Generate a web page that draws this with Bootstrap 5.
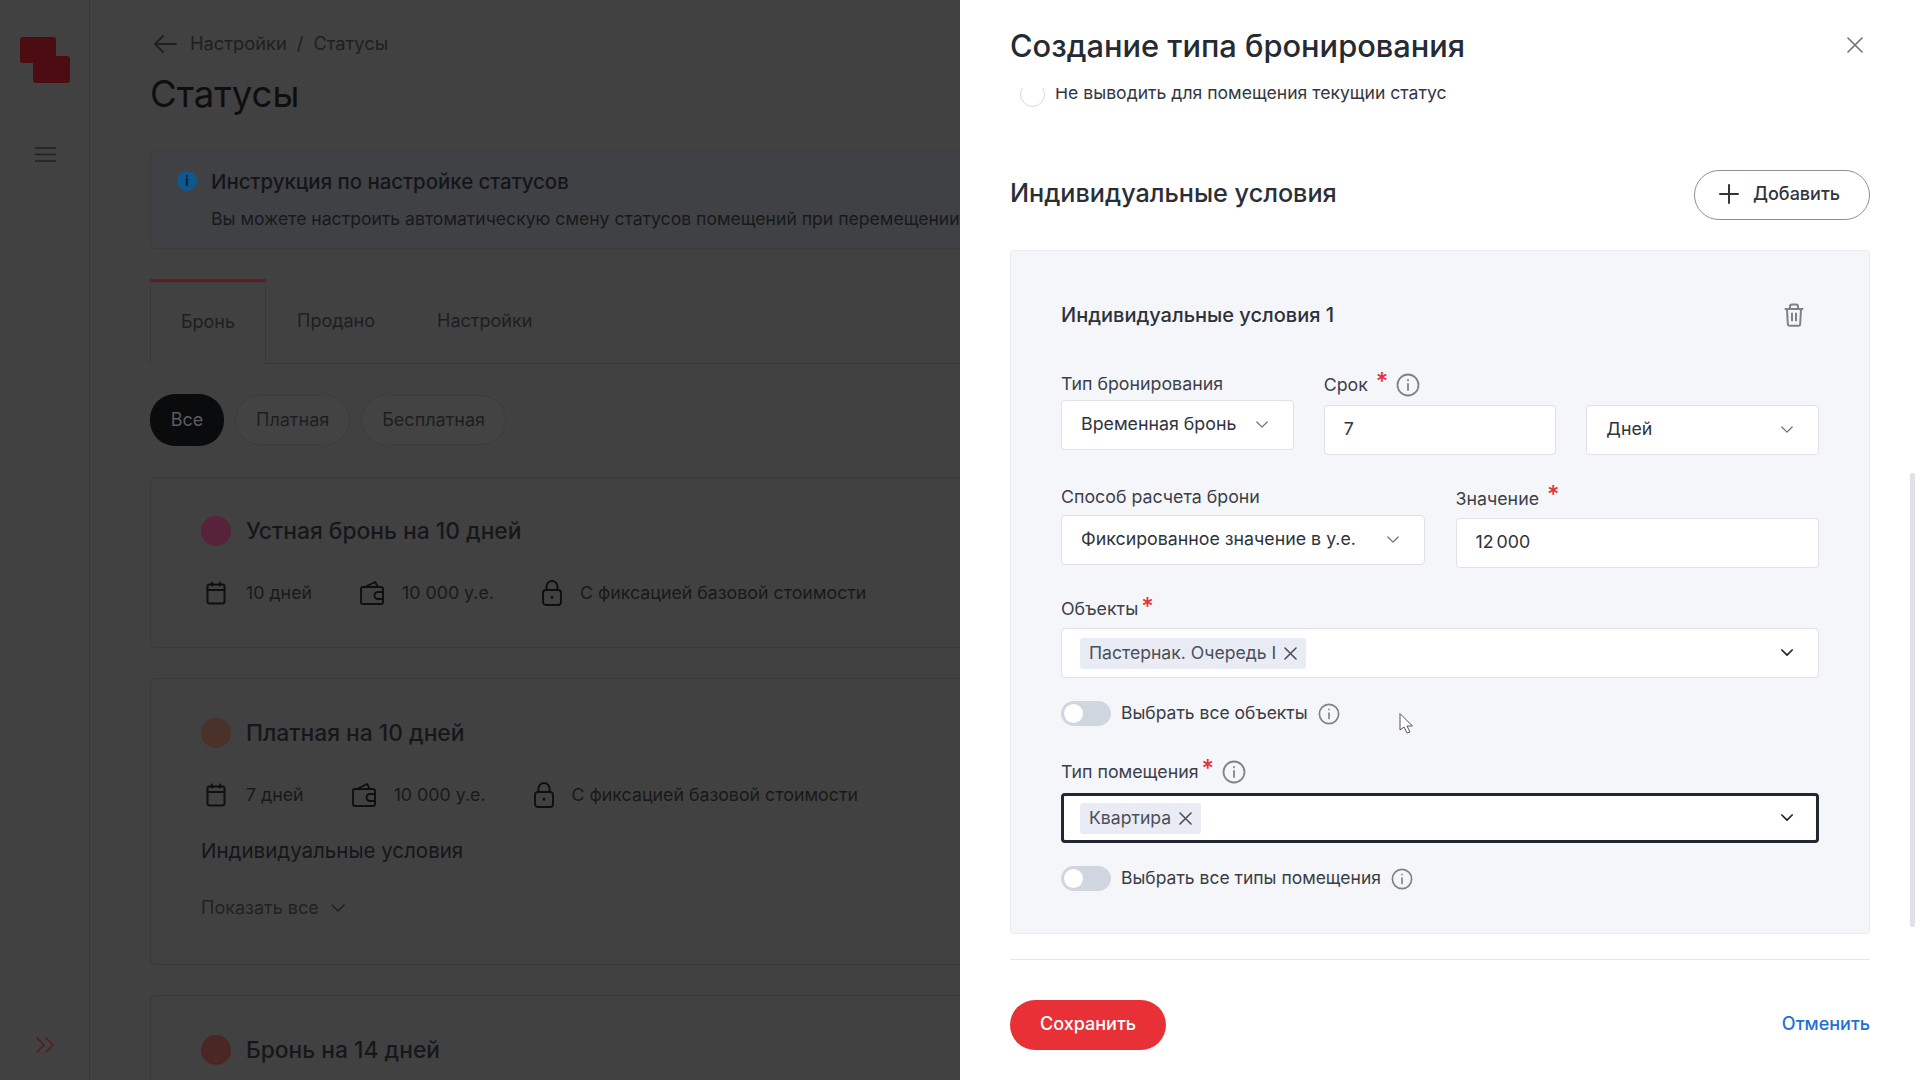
<!DOCTYPE html>
<html lang="ru">
<head>
    <meta charset="UTF-8">
    <meta name="viewport" content="width=device-width, initial-scale=1.0">
    <title>Статусы</title>
    <link href="https://cdn.jsdelivr.net/npm/bootstrap@5.3.0/dist/css/bootstrap.min.css" rel="stylesheet">
    <style>
        html, body { height: 100%; overflow: hidden; }
        body { font-family: Inter, "Noto Sans", sans-serif; background: #414141; color: #12141a; }
        svg { display: block; flex: none; fill: none; stroke: currentColor; stroke-width: 1.6; stroke-linecap: round; stroke-linejoin: round; }

        /* dimmed page behind the drawer */
        .side-rail { width: 90px; height: 100vh; flex: none; border-right: 1px solid #373737; padding: 37px 0 0 20px; position: relative; }
        .rail-logo { stroke: none; }
        .rail-logo path { fill: #4c0d12; }
        .rail-burger { margin: 64px 0 0 15px; color: #202020; stroke-width: 1.4; }
        .rail-expand { position: absolute; left: 36px; bottom: 27px; color: #5e1317; stroke-width: 1.3; }
        .page-main { padding: 29px 0 0 60px; width: 1830px; flex: none; }
        .crumbs { height: 30px; font-size: 18.3px; color: #1f1f1f; gap: 13px; }
        .crumb-back { margin-left: 3px; stroke-width: 2; }
        .crumb-sep { margin: 0 10px; }
        .page-title { font-size: 36.5px; line-height: 44px; font-weight: 400; margin: 13px 0 34px; color: #0e0e0e; }
        .info-box { height: 99px; background: #3f4144; border: 1px solid #3a3c40; border-radius: 5px; padding: 17px 0 0 26px; }
        .info-dot { width: 20px; height: 20px; border-radius: 50%; background: #0f578f; color: #0a2338; font-size: 14px; font-weight: 700; line-height: 20px; text-align: center; margin: 3px 14px 0 0; }
        .info-head { font-size: 20.4px; font-weight: 500; color: #13151a; line-height: 28px; }
        .info-text { font-size: 17.6px; color: #17191d; white-space: nowrap; margin: 11px 0 0 34px; line-height: 24px; }
        .tab-strip { margin-top: 30px; height: 85px; border-bottom: 1px solid #383838; font-size: 18px; color: #1e1e1e; }
        .tab-on { width: 116px; height: 85px; margin-bottom: -1px; border: 1px solid #383838; border-top: 3px solid #651a1e; border-bottom: 0; background: #414141; text-align: center; padding-top: 26px; }
        .tab-off { padding: 28px 0 0; margin-left: 31px; }
        .tab-off + .tab-off { margin-left: 62px; }
        .pill-row { margin: 30px 0 31px; gap: 11px; font-size: 18px; color: #1e1e1e; }
        .pill-item { height: 50px; line-height: 48px; border: 1px solid #3c3c3c; border-radius: 25px; padding: 0 20px; background: #434343; margin-top: 1px; }
        .pill-on { height: 52px; line-height: 52px; border: 0; margin-top: 0; background: #0a0b0d; color: #5c5c5c; width: 74px; padding: 0; text-align: center; }
        .stat-card { border: 1px solid #393939; border-radius: 5px; padding: 39px 0 0 50px; margin-bottom: 30px; height: 171px; }
        .stat-tall { height: 287px; }
        .stat-head { margin-top: -1px; }
        .stat-tall .stat-head, .stat-tall ~ .stat-card .stat-head { margin-top: 0; }
        .stat-dot { width: 30px; height: 30px; border-radius: 50%; margin-right: 15px; }
        .dot-plum { background: #57233b; }
        .dot-brown { background: #4a322b; }
        .dot-rust { background: #4a2624; }
        .stat-name { font-size: 22.8px; font-weight: 500; color: #16171a; line-height: 30px; }
        .stat-meta { margin-top: 33px; font-size: 17.8px; color: #191919; line-height: 28px; }
        .stat-meta svg { margin-right: 17px; color: #0f0f0f; stroke-width: 1.9; }
        .stat-meta svg:first-child { margin-left: 3px; margin-right: 18px; }
        .stat-gap { margin-right: 47px; }
        .stat-sub { font-size: 20.5px; color: #15161a; margin-top: 28px; line-height: 28px; }
        .stat-more { font-size: 18px; color: #212121; margin-top: 29px; line-height: 28px; gap: 12px; }

        /* drawer */
        .drawer-wide.offcanvas { width: 960px; border-left: 0; color: #262a33; }
        .drawer-head { height: 88px; padding: 0 50px; flex: none; background: #fff; position: relative; z-index: 2; }
        .drawer-title { font-size: 30.8px; line-height: 40px; font-weight: 500; color: #252a33; margin: 0; padding-top: 26px; }
        .drawer-close { position: absolute; right: 57px; top: 37px; color: #6d7178; }
        .drawer-body { padding: 0 50px; overflow: hidden; flex: 1; }
        .radio-line { margin: -6px 0 0 10px; height: 25px; font-size: 17.6px; line-height: 24px; color: #33373f; }
        .radio-line .form-check-input { width: 25px; height: 25px; margin: 0 10px 0 0; border-color: #d9dbe0; flex: none; }
        .radio-text { margin-top: -4px; }
        .cond-row { margin-top: 63px; height: 49px; }
        .cond-title { font-size: 25.2px; font-weight: 500; color: #2a2e37; margin: 0 0 2px; }
        .add-btn { width: 176px; height: 50px; border: 1px solid #8d9096; border-radius: 25px; font-size: 18px; font-weight: 500; color: #31353d; background: #fff; padding: 0 5px 2px 0; gap: 14px; }
        .add-btn svg { stroke-width: 2; }
        .cond-card { margin-top: 31px; background: #f5f6f9; border: 1px solid #e9ebef; border-radius: 4px; padding: 51px 50px 43px; height: 684px; }
        .cond-sub { font-size: 20px; font-weight: 500; line-height: 26px; color: #2d313a; margin: 0; }
        .trash-icon { color: #7c8087; margin-right: 15px; stroke-width: 2; }
        .field-lab { font-size: 17.8px; line-height: 22px; color: #3c4049; margin-bottom: 5px; gap: 5px; }
        .req-star { color: #e73137; font-size: 24px; font-weight: 500; line-height: 14px; align-self: flex-start; margin-top: 2px; }
        .tip-icon { color: #7f8389; margin-left: 3px; stroke-width: 1.8; }
        .field-box.form-control, .field-box.form-select { height: 50px; font-size: 17.8px; color: #2f333c; border: 1px solid #e0e2e8; border-radius: 4px; padding: 0 19px 1px; box-shadow: none; }
        .field-box.form-control { padding-bottom: 3px; }
        .value-money { word-spacing: -2px; }
        .field-box.form-select { background-image: url("data:image/svg+xml,%3csvg xmlns='http://www.w3.org/2000/svg' viewBox='0 0 14 9'%3e%3cpath fill='none' stroke='%236f737b' stroke-width='1.5' stroke-linecap='round' stroke-linejoin='round' d='M1 1l6 6 6-6'/%3e%3c/svg%3e"); background-position: right 25px center; background-size: 12px 8px; }
        .field-box.multi-box.form-select { padding: 0 18px; background-image: url("data:image/svg+xml,%3csvg xmlns='http://www.w3.org/2000/svg' viewBox='0 0 14 9'%3e%3cpath fill='none' stroke='%231f2733' stroke-width='2' stroke-linecap='round' stroke-linejoin='round' d='M1 1l6 6 6-6'/%3e%3c/svg%3e"); }
        .field-box.multi-focus.form-select { border: 3px solid #1f2733; padding: 0 16px; background-position: right 23px center; }
        .chip-item { height: 31px; line-height: 31px; padding: 0 9px 2px; background: #e9ecf4; border-radius: 3px; font-size: 17.6px; color: #4b4f58; gap: 8px; }
        .chip-item svg { margin-top: 2px; }
        .switch-line { gap: 10px; font-size: 17.5px; color: #393d46; height: 25px; padding: 0; margin: 0; }
        .switch-line .form-check-input { width: 50px; height: 25px; margin: 0; background-color: #cfd6df; border-color: #cfd6df; float: none; background-image: url("data:image/svg+xml,%3csvg xmlns='http://www.w3.org/2000/svg' viewBox='-4 -4 8 8'%3e%3ccircle r='3.3' fill='%23fff'/%3e%3c/svg%3e"); }
        .switch-line .tip-icon { margin-left: 0; }
        .drawer-rule { height: 1px; background: #e5e7eb; margin-top: 25px; }
        .drawer-foot { margin-top: 40px; }
        .save-btn { width: 156px; height: 50px; border-radius: 25px; background: #e73137; border: 0; color: #fff; font-size: 18px; font-weight: 500; padding: 0 0 3px; }
        .cancel-link { font-size: 18px; font-weight: 500; color: #1f6fd6; text-decoration: none; margin-bottom: 3px; }
        .drawer-scroll { position: absolute; right: 5px; top: 473px; width: 5px; height: 454px; background: #dfe1e6; border-radius: 3px; }
        .mouse-arrow { position: absolute; left: 1399px; top: 713px; z-index: 1100; stroke: #555; stroke-width: 1; fill: #fff; }

        /* form rows of the condition card */
        .row-term { margin-top: 45px; gap: 30px; }
        .row-calc { margin-top: 31px; gap: 31px; }
        .fld-third { width: 233px; }
        .fld-half { width: 364px; }
        .fld-unit { padding-top: 32px; }
        .lab-term { height: 24px; margin-bottom: 8px; }
        .lab-calc { margin-bottom: 7px; }
        .lab-value { height: 26px; margin-bottom: 6px; }
        .star-far { margin-left: 3px; }
        .star-near { margin-left: -2px; }
        .fld-objects { margin-top: 30px; }
        .lab-objects { margin-bottom: 8px; }
        .switch-first { margin-top: 23px; }
        .fld-rooms { margin-top: 34px; }
        .lab-rooms { margin-bottom: 9px; height: 24px; }
        .switch-second { margin-top: 23px; }
    </style>
</head>
<body>
    <svg width="0" height="0" class="position-absolute">
        <symbol id="i-cal" viewBox="0 0 24 24"><rect x="3.5" y="3.5" width="17" height="19" rx="2"/><path d="M3.5 9h17M8 1.500v3M16 1.500v3"/></symbol>
        <symbol id="i-wallet" viewBox="0 0 26 24"><path d="M6 6h16a2 2 0 0 1 2 2v13a2 2 0 0 1-2 2H4a2 2 0 0 1-2-2V8a2 2 0 0 1 2-2h2l10-5 3 5"/><path d="M24 11h-5a3.500 3.500 0 0 0 0 7h5"/></symbol>
        <symbol id="i-lock" viewBox="0 0 22 26"><rect x="2" y="10" width="18" height="15" rx="3"/><path d="M5.500 10V6.500a5.500 5.500 0 0 1 11 0V10"/><path d="M11 17v.5" stroke-width="2.500"/></symbol>
        <symbol id="i-info" viewBox="0 0 24 24"><circle cx="12" cy="12" r="10.500"/><path d="M12 11v6M12 7v.4"/></symbol>
    </svg>

    <div class="d-flex">
        <aside class="side-rail">
            <svg class="rail-logo" width="50" height="46" viewBox="0 0 50 46"><path d="M3 0h30a3 3 0 0 1 3 3v16h11a3 3 0 0 1 3 3v21a3 3 0 0 1-3 3H16a3 3 0 0 1-3-3V26H3a3 3 0 0 1-3-3V3a3 3 0 0 1 3-3z"/></svg>
            <svg class="rail-burger" width="21" height="15" viewBox="0 0 21 15"><path d="M0 1h21M0 7.500h21M0 14h21"/></svg>
            <svg class="rail-expand" width="18" height="16" viewBox="0 0 18 16"><path d="M1 1l7 7-7 7M10 1l7 7-7 7"/></svg>
        </aside>
        <main class="page-main">
            <div class="crumbs d-flex align-items-center">
                <svg class="crumb-back" width="24" height="20" viewBox="0 0 24 20"><path d="M23 10H2M10 2l-8 8 8 8" /></svg>
                <span>Настройки<span class="crumb-sep">/</span>Статусы</span>
            </div>
            <h1 class="page-title">Статусы</h1>
            <div class="info-box">
                <div class="d-flex">
                    <div class="info-dot">i</div>
                    <div class="info-head">Инструкция по настройке статусов</div>
                </div>
                <div class="info-text">Вы можете настроить автоматическую смену статусов помещений при перемещении сделки по воронке</div>
            </div>
            <div class="tab-strip d-flex">
                <div class="tab-on">Бронь</div>
                <div class="tab-off">Продано</div>
                <div class="tab-off">Настройки</div>
            </div>
            <div class="pill-row d-flex">
                <div class="pill-item pill-on">Все</div>
                <div class="pill-item">Платная</div>
                <div class="pill-item">Бесплатная</div>
            </div>
            <section class="stat-card">
                <div class="stat-head d-flex align-items-center">
                    <span class="stat-dot dot-plum"></span>
                    <span class="stat-name">Устная бронь на 10 дней</span>
                </div>
                <div class="stat-meta d-flex align-items-center">
                    <svg width="24" height="24"><use href="#i-cal"/></svg><span class="stat-gap">10 дней</span>
                    <svg width="26" height="24"><use href="#i-wallet"/></svg><span class="stat-gap">10 000 у.е.</span>
                    <svg width="22" height="26"><use href="#i-lock"/></svg><span>С фиксацией базовой стоимости</span>
                </div>
            </section>
            <section class="stat-card stat-tall">
                <div class="stat-head d-flex align-items-center">
                    <span class="stat-dot dot-brown"></span>
                    <span class="stat-name">Платная на 10 дней</span>
                </div>
                <div class="stat-meta d-flex align-items-center">
                    <svg width="24" height="24"><use href="#i-cal"/></svg><span class="stat-gap">7 дней</span>
                    <svg width="26" height="24"><use href="#i-wallet"/></svg><span class="stat-gap">10 000 у.е.</span>
                    <svg width="22" height="26"><use href="#i-lock"/></svg><span>С фиксацией базовой стоимости</span>
                </div>
                <div class="stat-sub">Индивидуальные условия</div>
                <div class="stat-more d-flex align-items-center">Показать все
                    <svg width="14" height="9" viewBox="0 0 14 9"><path d="M1 1l6 6 6-6"/></svg>
                </div>
            </section>
            <section class="stat-card">
                <div class="stat-head d-flex align-items-center">
                    <span class="stat-dot dot-rust"></span>
                    <span class="stat-name">Бронь на 14 дней</span>
                </div>
            </section>
        </main>
    </div>

    <div class="offcanvas offcanvas-end show drawer-wide">
        <div class="drawer-head">
            <h2 class="drawer-title">Создание типа бронирования</h2>
            <svg class="drawer-close" width="16" height="16" viewBox="0 0 16 16"><path d="M1 1l14 14M15 1L1 15"/></svg>
        </div>
        <div class="drawer-body">
            <div class="radio-line d-flex align-items-center">
                <input class="form-check-input" type="radio">
                <span class="radio-text">Не выводить для помещения текущий статус</span>
            </div>
            <div class="cond-row d-flex justify-content-between align-items-center">
                <h3 class="cond-title">Индивидуальные условия</h3>
                <button class="btn add-btn d-flex align-items-center justify-content-center" type="button">
                    <svg width="20" height="20" viewBox="0 0 20 20"><path d="M10 1v18M1 10h18"/></svg>Добавить
                </button>
            </div>
            <div class="cond-card">
                <div class="d-flex justify-content-between align-items-center">
                    <h4 class="cond-sub">Индивидуальные условия 1</h4>
                    <svg class="trash-icon" width="20" height="24" viewBox="0 0 20 24"><path d="M1.500 6h17M6 6V3.500a2 2 0 0 1 2-2h4a2 2 0 0 1 2 2V6M3 6l.8 15a2 2 0 0 0 2 1.800h8.400a2 2 0 0 0 2-1.800L17 6M8 10.500v7M12 10.500v7"/></svg>
                </div>
                <div class="row-term d-flex">
                    <div class="fld-third">
                        <div class="field-lab">Тип бронирования</div>
                        <select class="form-select field-box"><option>Временная бронь</option></select>
                    </div>
                    <div class="fld-third">
                        <div class="field-lab lab-term d-flex align-items-center">Срок <span class="req-star star-far">*</span><svg class="tip-icon" width="24" height="24"><use href="#i-info"/></svg></div>
                        <input class="form-control field-box" value="7">
                    </div>
                    <div class="fld-third fld-unit">
                        <select class="form-select field-box"><option>Дней</option></select>
                    </div>
                </div>
                <div class="row-calc d-flex">
                    <div class="fld-half">
                        <div class="field-lab lab-calc">Способ расчета брони</div>
                        <select class="form-select field-box"><option>Фиксированное значение в у.е.</option></select>
                    </div>
                    <div class="fld-half">
                        <div class="field-lab lab-value d-flex align-items-center">Значение <span class="req-star star-far">*</span></div>
                        <input class="form-control field-box value-money" value="12 000">
                    </div>
                </div>
                <div class="fld-objects">
                    <div class="field-lab lab-objects d-flex align-items-center">Объекты <span class="req-star star-near">*</span></div>
                    <div class="form-select field-box multi-box d-flex align-items-center">
                        <span class="chip-item d-inline-flex align-items-center">Пастернак. Очередь I
                            <svg width="13" height="13" viewBox="0 0 13 13"><path d="M1 1l11 11M12 1L1 12"/></svg>
                        </span>
                    </div>
                </div>
                <div class="form-check form-switch switch-line switch-first d-flex align-items-center">
                    <input class="form-check-input" type="checkbox" role="switch">
                    <span>Выбрать все объекты</span>
                    <svg class="tip-icon" width="22" height="22"><use href="#i-info"/></svg>
                </div>
                <div class="fld-rooms">
                    <div class="field-lab lab-rooms d-flex align-items-center">Тип помещения <span class="req-star star-near">*</span><svg class="tip-icon" width="24" height="24"><use href="#i-info"/></svg></div>
                    <div class="form-select field-box multi-box multi-focus d-flex align-items-center">
                        <span class="chip-item d-inline-flex align-items-center">Квартира
                            <svg width="13" height="13" viewBox="0 0 13 13"><path d="M1 1l11 11M12 1L1 12"/></svg>
                        </span>
                    </div>
                </div>
                <div class="form-check form-switch switch-line switch-second d-flex align-items-center">
                    <input class="form-check-input" type="checkbox" role="switch">
                    <span>Выбрать все типы помещения</span>
                    <svg class="tip-icon" width="22" height="22"><use href="#i-info"/></svg>
                </div>
            </div>
            <div class="drawer-rule"></div>
            <div class="drawer-foot d-flex justify-content-between align-items-center">
                <button class="btn save-btn" type="button">Сохранить</button>
                <a class="cancel-link" href="#">Отменить</a>
            </div>
        </div>
        <div class="drawer-scroll"></div>
    </div>

    <svg class="mouse-arrow" width="16" height="22" viewBox="0 0 16 22"><path d="M1 1v16l4-3 3 6 3-1-3-6h5z"/></svg>
</body>
</html>
